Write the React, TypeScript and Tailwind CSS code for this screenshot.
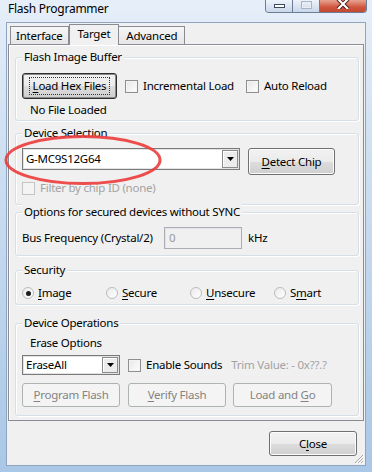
import type { ReactNode } from 'react'

function U({ children }: { children: ReactNode }) {
  return <span className="underline decoration-1 underline-offset-[2px]">{children}</span>
}

function Btn({
  children,
  disabled,
  primary,
  className = '',
}: {
  children: ReactNode
  disabled?: boolean
  primary?: boolean
  className?: string
}) {
  if (disabled) {
    return (
      <div className={`flex items-center justify-center rounded-[3px] border border-[#adb2b5] bg-[#f4f4f4] text-[#838383] ${className}`}>
        <span>{children}</span>
      </div>
    )
  }
  return (
    <div
      className={`flex items-center justify-center rounded-[3px] border bg-[linear-gradient(#f2f2f2_0%,#ebebeb_50%,#dddddd_50%,#cfcfcf_100%)] ${
        primary ? 'border-[#2e2e2e] shadow-[inset_0_0_0_1px_#8a8a8a]' : 'border-[#707070] shadow-[inset_0_0_0_1px_#fcfcfc]'
      } ${className}`}
    >
      <span className={primary ? 'px-[3px] outline outline-1 outline-dotted outline-[#333]' : ''}>{children}</span>
    </div>
  )
}

function Check({ label, disabled }: { label: ReactNode; disabled?: boolean }) {
  return (
    <div className={`flex items-center gap-[5px] ${disabled ? 'text-[#a3a3a3]' : ''}`}>
      <span
        className={`h-[13px] w-[13px] border ${
          disabled ? 'border-[#c4c4c4] bg-[#f4f4f4]' : 'border-[#8e8f8f] bg-[linear-gradient(135deg,#e6e6e6,#ffffff)] shadow-[inset_0_0_0_1px_#f4f4f4]'
        }`}
      />
      <span>{label}</span>
    </div>
  )
}

function Radio({ label, checked }: { label: ReactNode; checked?: boolean }) {
  return (
    <div className="flex w-[85px] items-center gap-[4px]">
      <span className="flex h-[12px] w-[12px] items-center justify-center rounded-full border border-[#b9bcc0] bg-[linear-gradient(135deg,#eaeaea,#ffffff)]">
        {checked && <span className="h-[5px] w-[5px] rounded-full bg-[#1d1d1d]" />}
      </span>
      <span>{label}</span>
    </div>
  )
}

function Combo({ value, className = '' }: { value: string; className?: string }) {
  return (
    <div className={`flex border border-[#7a7a7a] bg-white shadow-[inset_0_0_0_1px_#e3e3e3] ${className}`}>
      <div className="flex flex-1 items-center pl-[3px]">{value}</div>
      <div className="m-[1px] flex w-[16px] items-center justify-center border border-[#8c8c8c] bg-[#ececec] shadow-[inset_1px_1px_0_#fff]">
        <svg width="7" height="4" viewBox="0 0 7 4">
          <path d="M0 0h7L3.5 4z" fill="#000" />
        </svg>
      </div>
    </div>
  )
}

function Group({ title, className = '', children }: { title: string; className?: string; children: ReactNode }) {
  return (
    <div className={`relative ml-[6px] w-[344px] rounded-[3px] border border-[#d5dfe5] shadow-[inset_1px_1px_0_#fff,1px_1px_0_#fff] ${className}`}>
      <span className="absolute -top-[9px] left-[6px] bg-[#f0f0f0] px-[2px] leading-[16px]">{title}</span>
      {children}
    </div>
  )
}

export default function App() {
  return (
    <div className="relative h-[472px] w-[372px] overflow-hidden bg-[linear-gradient(#e6eff9_0%,#d3e2f3_25%,#a9c7e6_100%)] font-['Segoe_UI','Noto_Sans',sans-serif] text-[11.5px] leading-[16px] tracking-[-0.25px] text-black">
      {/* title bar */}
      <div className="flex h-[22px] items-start justify-between pl-[8px] pr-[5px]">
        <span className="mt-[1px] text-[12px]">Flash Programmer</span>
        <div className="flex h-[13px] overflow-hidden rounded-b-[4px] border border-t-0 border-[#6b7d96]">
          <div className="flex w-[27px] items-end justify-center border-r border-[#6b7d96] bg-[linear-gradient(#eef3fa,#c9d7e9)] pb-[4px]">
            <span className="h-[4px] w-[11px] border border-[#3c4a5e] bg-white" />
          </div>
          <div className="flex w-[27px] items-start justify-center border-r border-[#6b7d96] bg-[linear-gradient(#eef3fa,#c9d7e9)] pt-[1px]">
            <span className="h-[8px] w-[11px] border border-[#a7b5c8] shadow-[inset_0_0_0_1px_#e9eef5]" />
          </div>
          <div className="flex w-[46px] items-start justify-center bg-[linear-gradient(#e8a492,#d0563f_60%,#c14a2f)]">
            <svg width="14" height="9" viewBox="0 0 14 9">
              <path d="M2 -1L7 4L12 -1M2 9L7 4L12 9" stroke="#4a1a10" strokeWidth="4" fill="none" />
              <path d="M2 -1L7 4L12 -1M2 9L7 4L12 9" stroke="#fff" strokeWidth="2.2" fill="none" />
            </svg>
          </div>
        </div>
      </div>

      {/* client area */}
      <div className="relative ml-[6px] h-[444px] w-[360px] border border-[#8fa5bf] bg-[#f0f0f0]">
        {/* tabs */}
        <div className="flex h-[21px] items-end pl-[3px]">
          <div className="flex h-[18px] items-center border border-b-0 border-[#898c95] bg-[linear-gradient(#f6f6f6,#e6e6e6)] px-[5px]">Interface</div>
          <div className="relative z-10 -mb-[1px] flex h-[21px] items-center border border-b-0 border-[#898c95] bg-[#f0f0f0] px-[8px] pb-[2px]">Target</div>
          <div className="flex h-[18px] items-center border border-b-0 border-l-0 border-[#898c95] bg-[linear-gradient(#f6f6f6,#e6e6e6)] px-[7px]">Advanced</div>
        </div>

        {/* tab panel */}
        <div className="ml-[1px] h-[377px] w-[356px] border border-[#898c95] bg-[#f0f0f0] pt-[12px] shadow-[inset_1px_1px_0_#fff]">
          <Group title="Flash Image Buffer" className="h-[64px] pl-[6px] pt-[15px]">
            <div className="flex items-center">
              <Btn primary className="h-[26px] w-[95px]">
                <U>L</U>oad Hex Files
              </Btn>
              <div className="ml-[8px]">
                <Check label="Incremental Load" />
              </div>
              <div className="ml-[12px]">
                <Check label="Auto Reload" />
              </div>
            </div>
            <div className="mt-[3px] pl-[8px]">No File Loaded</div>
          </Group>

          <Group title="Device Selection" className="mt-[12px] h-[72px] pl-[6px] pt-[14px]">
            <div className="flex items-start">
              <Combo value="G-MC9S12G64" className="h-[22px] w-[218px]" />
              <Btn className="ml-[8px] h-[27px] w-[87px]">
                <U>D</U>etect Chip
              </Btn>
            </div>
            <div className="mt-[5px]">
              <Check disabled label="Filter by chip ID (none)" />
            </div>
          </Group>

          <Group title="Options for secured devices without SYNC" className="mt-[7px] h-[44px] pl-[6px] pt-[14px]">
            <div className="flex items-center">
              <span className="w-[142px]">Bus Frequency (Crystal/2)</span>
              <div className="flex h-[22px] w-[78px] items-center border border-[#abadb3] bg-[#f0f0f0] pl-[4px] text-[#9a9a9a] shadow-[inset_1px_1px_0_#e2e3ea]">0</div>
              <span className="ml-[6px]">kHz</span>
            </div>
          </Group>

          <Group title="Security" className="mt-[14px] h-[35px] pl-[6px] pt-[14px]">
            <div className="flex">
              <Radio checked label={<><U>I</U>mage</>} />
              <Radio label={<><U>S</U>ecure</>} />
              <Radio label={<><U>U</U>nsecure</>} />
              <Radio label={<>S<U>m</U>art</>} />
            </div>
          </Group>

          <Group title="Device Operations" className="mt-[18px] h-[93px] pl-[6px] pt-[11px]">
            <div className="pl-[8px]">Erase Options</div>
            <div className="mt-[4px] flex items-center">
              <Combo value="EraseAll" className="h-[20px] w-[98px]" />
              <div className="ml-[8px]">
                <Check label="Enable Sounds" />
              </div>
              <span className="ml-[9px] text-[#a3a3a3]">Trim Value: - 0x??.?</span>
            </div>
            <div className="mt-[8px] flex">
              <Btn disabled className="h-[24px] w-[98px]">
                <U>P</U>rogram Flash
              </Btn>
              <Btn disabled className="ml-[8px] h-[24px] w-[98px]">
                <U>V</U>erify Flash
              </Btn>
              <Btn disabled className="ml-[7px] h-[24px] w-[99px]">
                Load and <U>G</U>o
              </Btn>
            </div>
          </Group>
        </div>

        <div className="mt-[10px] flex justify-end pr-[8px]">
          <Btn className="h-[25px] w-[88px]">
            C<U>l</U>ose
          </Btn>
        </div>

        {/* size grip */}
        <svg className="absolute bottom-[1px] right-[1px]" width="10" height="10" viewBox="0 0 10 10">
          <path d="M9 1L1 9M9 4L4 9M9 7L7 9" stroke="#a8a8a8" strokeWidth="1" />
          <path d="M10 2L2 10M10 5L5 10M10 8L8 10" stroke="#fff" strokeWidth="1" />
        </svg>
      </div>

      {/* red annotation ellipse */}
      <svg className="absolute left-[3px] top-[134px]" width="160" height="52" viewBox="0 0 160 52">
        <ellipse cx="80" cy="26" rx="77" ry="23.5" fill="none" stroke="#ec3b3b" strokeOpacity="0.9" strokeWidth="3" />
      </svg>
    </div>
  )
}
